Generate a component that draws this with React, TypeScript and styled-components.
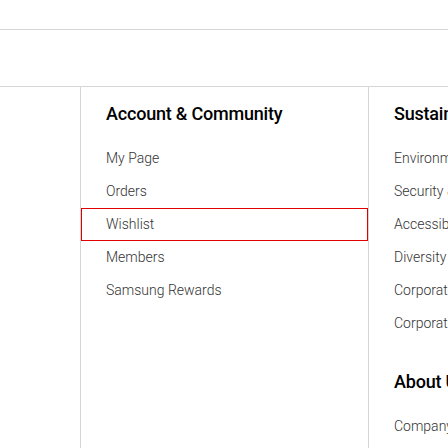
import React from "react";
import styled, { createGlobalStyle } from "styled-components";

const Global = createGlobalStyle`
  html, body { margin: 0; padding: 0; background: #fff; overflow: hidden; }
  body { font-family: Roboto, "Open Sans", sans-serif; width: 448px; height: 448px; }
`;

const Page = styled.div`
  width: 448px;
  height: 448px;
  overflow: hidden;
`;

const TopBar = styled.div`
  height: 29px;
  border-bottom: 1px solid #d6d6d6;
`;

const Spacer = styled.div`
  height: 56px;
`;

const Columns = styled.div`
  display: grid;
  grid-template-columns: 80px 288px 288px;
  border-top: 1px solid #d6d6d6;
  height: 400px;
`;

const Column = styled.div<{ $first?: boolean }>`
  border-left: ${(p) => (p.$first ? "none" : "1px solid #d6d6d6")};
  padding-top: 15px;
  min-width: 0;
`;

const Heading = styled.h3<{ $spaced?: boolean }>`
  margin: ${(p) => (p.$spaced ? "30px" : "0")} 0 16px 25px;
  font-size: 18px;
  line-height: 24px;
  font-weight: 500;
  color: #000;
  white-space: nowrap;
  letter-spacing: -0.2px;
`;

const List = styled.ul`
  list-style: none;
  margin: 0;
  padding: 0;
`;

const Item = styled.li``;

const Link = styled.a<{ $focused?: boolean }>`
  display: block;
  padding-left: 25px;
  font-size: 14px;
  font-weight: 300;
  line-height: 33px;
  height: 33px;
  color: #333;
  text-decoration: none;
  white-space: nowrap;
  outline: ${(p) => (p.$focused ? "1px solid #e00000" : "none")};
  outline-offset: -1px;
`;

const account = ["My Page", "Orders", "Wishlist", "Members", "Samsung Rewards"];
const sustain = [
  "Environment",
  "Security & Privacy",
  "Accessibility",
  "Diversity · Equity · Inclusion",
  "Corporate Citizenship",
  "Corporate Sustainability",
];
const about = ["Company Info", "Business Area", "Brand Identity"];

export default function App() {
  return (
    <Page>
      <Global />
      <TopBar />
      <Spacer />
      <Columns>
        <Column $first />
        <Column>
          <Heading>Account &amp; Community</Heading>
          <List>
            {account.map((a) => (
              <Item key={a}>
                <Link href="#" $focused={a === "Wishlist"}>{a}</Link>
              </Item>
            ))}
          </List>
        </Column>
        <Column>
          <Heading>Sustainability</Heading>
          <List>
            {sustain.map((a) => (
              <Item key={a}>
                <Link href="#">{a}</Link>
              </Item>
            ))}
          </List>
          <Heading $spaced>About Us</Heading>
          <List>
            {about.map((a) => (
              <Item key={a}>
                <Link href="#">{a}</Link>
              </Item>
            ))}
          </List>
        </Column>
      </Columns>
    </Page>
  );
}
